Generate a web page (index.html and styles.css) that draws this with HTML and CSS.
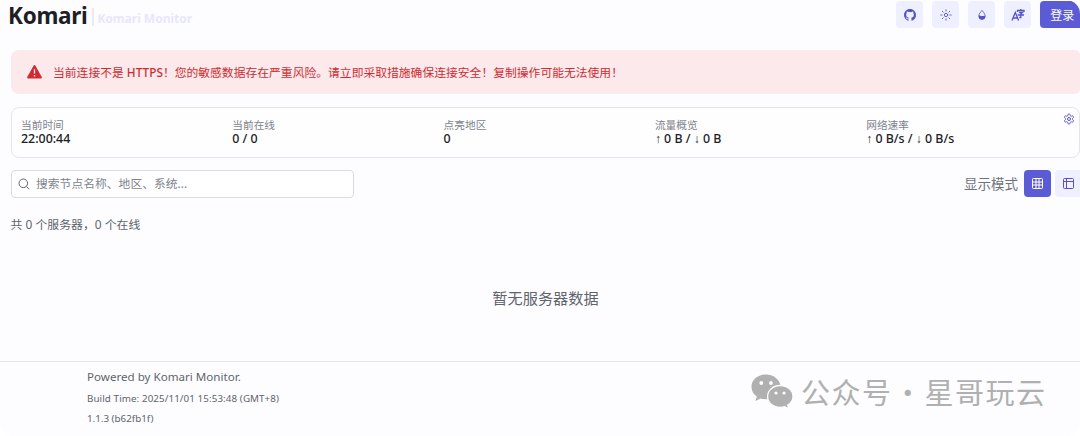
FILE: index.html
```html
<!DOCTYPE html>
<html lang="zh-CN">

<head>
    <meta charset="UTF-8">
    <meta name="viewport" content="width=device-width, initial-scale=1.0">
    <title>Komari Monitor</title>
    <link rel="stylesheet" href="styles.css">
</head>

<body>
    <div class="page">
        <header class="header">
            <div class="brand">
                <span class="brand-name">Komari</span>
                <span class="brand-sub">Komari Monitor</span>
            </div>
            <nav class="actions">
                <button class="icon-btn" aria-label="GitHub">
                    <svg width="12" height="12" viewBox="0 0 16 16" fill="currentColor"><path d="M8 0C3.58 0 0 3.58 0 8c0 3.54 2.29 6.53 5.47 7.59.4.07.55-.17.55-.38 0-.19-.01-.82-.01-1.49-2.01.37-2.53-.49-2.69-.94-.09-.23-.48-.94-.82-1.13-.28-.15-.68-.52-.01-.53.63-.01 1.08.58 1.23.82.72 1.21 1.87.87 2.33.66.07-.52.28-.87.51-1.07-1.78-.2-3.64-.89-3.64-3.95 0-.87.31-1.59.82-2.15-.08-.2-.36-1.02.08-2.12 0 0 .67-.21 2.2.82.64-.18 1.32-.27 2-.27s1.36.09 2 .27c1.53-1.04 2.2-.82 2.2-.82.44 1.1.16 1.92.08 2.12.51.56.82 1.27.82 2.15 0 3.07-1.87 3.75-3.65 3.95.29.25.54.73.54 1.48 0 1.07-.01 1.93-.01 2.2 0 .21.15.46.55.38A8.01 8.01 0 0 0 16 8c0-4.42-3.58-8-8-8z"/></svg>
                </button>
                <button class="icon-btn" aria-label="主题">
                    <svg width="12" height="12" viewBox="0 0 15 15" fill="none" stroke="currentColor" stroke-width="1.1" stroke-linecap="round"><circle cx="7.5" cy="7.5" r="2.1"/><path d="M7.5 1v1.6M7.5 12.4V14M1 7.5h1.6M12.4 7.5H14M2.9 2.9 4 4M11 11l1.1 1.1M2.9 12.1 4 11M11 4l1.1-1.1"/></svg>
                </button>
                <button class="icon-btn" aria-label="颜色">
                    <svg width="12" height="12" viewBox="0 0 15 15"><path d="M7.5 1.6C6 3.8 3.5 6 3.5 9a4 4 0 0 0 8 0c0-3-2.5-5.2-4-7.4z" fill="none" stroke="currentColor" stroke-width="1"/><path d="M3.5 8.5c1.5-.9 2.6.7 4 .4 1.5-.3 2.5-.9 4-.4V9a4 4 0 0 1-8 0z" fill="currentColor"/></svg>
                </button>
                <button class="icon-btn" aria-label="语言">
                    <svg width="14" height="14" viewBox="0 0 14 14" fill="none" stroke="currentColor" stroke-width="1.3"><path d="M1 12.5 4.3 4.5 7.6 12.5M2.2 10h4.2M6.5 4V2.5H13V4M9.7 1v1.5M8 4.5h3.5L9.8 6v3.5H8.3M6.7 7h6.3"/></svg>
                </button>
                <button class="login-btn">登录</button>
            </nav>
        </header>

        <main class="main">
            <div class="alert">
                <svg class="alert-icon" width="17" height="16" viewBox="0 0 17 16"><path d="M8.5 2.2 14.8 13.5H2.2z" fill="currentColor" stroke="currentColor" stroke-width="2.2" stroke-linejoin="round"/><path d="M8.5 5.3v4.2M8.5 11v1.4" stroke="#fce9eb" stroke-width="1.3"/></svg>
                <span class="alert-text">当前连接不是 <span class="medium">HTTPS</span>！您的敏感数据存在严重风险。请立即采取措施确保连接安全！复制操作可能无法使用！</span>
            </div>

            <section class="stats">
                <div class="stat">
                    <span class="stat-label">当前时间</span>
                    <span class="stat-value">22:00:44</span>
                </div>
                <div class="stat">
                    <span class="stat-label">当前在线</span>
                    <span class="stat-value">0 / 0</span>
                </div>
                <div class="stat">
                    <span class="stat-label">点亮地区</span>
                    <span class="stat-value">0</span>
                </div>
                <div class="stat">
                    <span class="stat-label">流量概览</span>
                    <span class="stat-value"><i class="arrow">↑</i> 0 B / <i class="arrow">↓</i> 0 B</span>
                </div>
                <div class="stat">
                    <span class="stat-label">网络速率</span>
                    <span class="stat-value"><i class="arrow">↑</i> 0 B/s / <i class="arrow">↓</i> 0 B/s</span>
                </div>
                <svg class="gear" width="12" height="12" viewBox="0 0 24 24" fill="none" stroke="currentColor" stroke-width="2"><path d="M12.22 2h-.44a2 2 0 0 0-2 2v.18a2 2 0 0 1-1 1.73l-.43.25a2 2 0 0 1-2 0l-.15-.08a2 2 0 0 0-2.73.73l-.22.38a2 2 0 0 0 .73 2.73l.15.1a2 2 0 0 1 1 1.72v.51a2 2 0 0 1-1 1.74l-.15.09a2 2 0 0 0-.73 2.73l.22.38a2 2 0 0 0 2.73.73l.15-.08a2 2 0 0 1 2 0l.43.25a2 2 0 0 1 1 1.73V20a2 2 0 0 0 2 2h.44a2 2 0 0 0 2-2v-.18a2 2 0 0 1 1-1.73l.43-.25a2 2 0 0 1 2 0l.15.08a2 2 0 0 0 2.73-.73l.22-.39a2 2 0 0 0-.73-2.73l-.15-.08a2 2 0 0 1-1-1.74v-.5a2 2 0 0 1 1-1.74l.15-.09a2 2 0 0 0 .73-2.73l-.22-.38a2 2 0 0 0-2.73-.73l-.15.08a2 2 0 0 1-2 0l-.43-.25a2 2 0 0 1-1-1.73V4a2 2 0 0 0-2-2z"/><circle cx="12" cy="12" r="3"/></svg>
            </section>

            <div class="toolbar">
                <label class="search">
                    <svg width="12" height="12" viewBox="0 0 12 12" fill="none" stroke="currentColor" stroke-width="1"><circle cx="5.3" cy="5.3" r="4.3"/><path d="m8.4 8.4 2.8 2.8"/></svg>
                    <input type="text" placeholder="搜索节点名称、地区、系统...">
                </label>
                <div class="view-mode">
                    <span class="view-label">显示模式</span>
                    <button class="icon-btn active" aria-label="网格">
                        <svg width="11" height="11" viewBox="0 0 11 11" fill="none" stroke="currentColor" stroke-width="1"><rect x=".5" y=".5" width="10" height="10" rx=".8"/><path d="M4 .5v10M7 .5v10M.5 4h10M.5 7h10"/></svg>
                    </button>
                    <button class="icon-btn" aria-label="表格">
                        <svg width="11" height="11" viewBox="0 0 11 11" fill="none" stroke="currentColor" stroke-width="1"><rect x=".5" y=".5" width="10" height="10" rx="1"/><path d="M3.5 .5v10M.5 3.5h10"/></svg>
                    </button>
                </div>
            </div>

            <p class="summary">共 0 个服务器，0 个在线</p>
            <p class="empty">暂无服务器数据</p>
        </main>

        <footer class="footer">
            <p class="powered">Powered by Komari Monitor.</p>
            <p class="build">Build Time: 2025/11/01 15:53:48 (GMT+8)</p>
            <p>1.1.3 (b62fb1f)</p>
        </footer>

        <div class="watermark">
            <svg width="42" height="35" viewBox="0 0 42 35">
                <path fill="#b0b0b0" d="M15 .5C6.9.5.5 6 .5 13c0 4 2 7.3 5.3 9.6L4.5 27l5-2.6c1.7.6 3.5.9 5.5.9 8 0 14.500-5.300 14.500-12.300S23 .5 15 .5z"/>
                <path fill="#b0b0b0" stroke="#fdfdff" stroke-width="1.3" d="M29.3 11.5c-7.2 0-12.7 4.8-12.7 10.9s5.5 10.9 12.7 10.9c1.5 0 3-.2 4.3-.6l4.2 2.1-1.1-3.7c3.2-2 5.3-5.1 5.3-8.7 0-6.1-5.5-10.9-12.7-10.9z"/>
                <g fill="#fdfdff"><circle cx="10.3" cy="9" r="1.9"/><circle cx="20" cy="9" r="1.9"/><circle cx="25" cy="19" r="1.6"/><circle cx="33" cy="19" r="1.6"/></g>
            </svg>
            <span class="watermark-text">公众号 · 星哥玩云</span>
        </div>
    </div>
</body>

</html>
```
FILE: styles.css
```css
* {
    box-sizing: border-box;
}

html {
    background: #fff;
}

body {
    margin: 0;
    font-family: "Noto Sans", "Noto Sans CJK SC", sans-serif;
    color: #1c2024;
}

p {
    margin: 0;
}

button {
    border: none;
    padding: 0;
    font-family: inherit;
    cursor: pointer;
}

.page {
    position: relative;
    height: 436px;
    display: flex;
    flex-direction: column;
    overflow: hidden;
    background: #fdfdff;
    border-radius: 14px;
}

.header {
    display: flex;
    justify-content: space-between;
    height: 30px;
    padding: 1px 0 0 8px;
}

.brand {
    display: flex;
    align-items: center;
}

.brand-name {
    font-size: 22.5px;
    font-weight: 700;
    line-height: 28px;
    letter-spacing: -0.3px;
}

.brand-sub {
    margin: 3px 0 0 5px;
    padding: 3px 0 0 3px;
    border-left: 2px solid #ebebef;
    font-size: 12px;
    font-weight: 700;
    line-height: 15px;
    color: #e6e7ff;
}

.actions {
    display: flex;
    gap: 9px;
    flex-shrink: 0;
    padding-top: 0.4px;
}

.icon-btn {
    display: flex;
    align-items: center;
    justify-content: center;
    width: 27px;
    height: 27px;
    border-radius: 4px;
    background: #eeefff;
    color: #5753c6;
}

.icon-btn.active {
    background: #5b5bd6;
    color: #fff;
}

.login-btn {
    width: 39.6px;
    height: 27px;
    padding-left: 4px;
    border-radius: 4px 0 0 4px;
    background: #5b5bd6;
    color: #fff;
    font-size: 12px;
}

.main {
    flex: 1;
    padding: 20px 0 0 11px;
}

.alert {
    display: flex;
    align-items: center;
    gap: 10px;
    height: 44px;
    padding-left: 15px;
    border-radius: 8px 5px 5px 8px;
    background: #fce9eb;
    color: #ce2c31;
    font-size: 11.8px;
    white-space: nowrap;
}

.alert-icon {
    flex-shrink: 0;
}

.alert-text {
    padding-bottom: 1px;
}

.medium {
    font-weight: 500;
}

.stats {
    position: relative;
    display: grid;
    grid-template-columns: repeat(5, 211.3px);
    height: 51px;
    margin-top: 13px;
    padding: 10px 0 0 9px;
    border: 1px solid #e4e4ea;
    border-radius: 8px;
    background: #fefeff;
    overflow: hidden;
}

.stat {
    display: flex;
    flex-direction: column;
}

.stat-label {
    font-size: 10.7px;
    line-height: 14px;
    color: #80838d;
}

.stat-value {
    font-size: 12.4px;
    font-weight: 500;
    line-height: 13px;
}

.arrow {
    display: inline-block;
    width: 6px;
    font-family: "Liberation Sans", sans-serif;
    font-size: 12px;
    font-style: normal;
}

.gear {
    position: absolute;
    top: 5px;
    right: 4px;
    color: #5753c6;
}

.toolbar {
    display: flex;
    justify-content: space-between;
    margin-top: 12px;
}

.search {
    display: flex;
    align-items: center;
    gap: 6px;
    width: 343px;
    height: 27.5px;
    padding-left: 6px;
    border: 1px solid #d9d9e0;
    border-radius: 4px;
    background: #fff;
    color: #60646c;
}

.search input {
    flex: 1;
    border: none;
    outline: none;
    padding: 0 0 1px;
    background: none;
    font-family: inherit;
    font-size: 11.8px;
}

.search input::placeholder {
    color: #80838d;
}

.view-mode {
    display: flex;
    align-items: center;
    gap: 4px;
    margin-right: -2px;
}

.view-label {
    margin-right: 2px;
    font-size: 13.5px;
    line-height: 20px;
    color: #6f727b;
}

.summary {
    margin-top: 17px;
    margin-left: -0.5px;
    font-size: 11.9px;
    line-height: 18px;
    color: #60646c;
}

.empty {
    margin-top: 53px;
    font-size: 15.2px;
    line-height: 24px;
    color: #60646c;
    text-align: center;
}

.footer {
    height: 75px;
    padding: 5px 0 0 87px;
    border-top: 1px solid #e3e4e8;
    font-size: 9.8px;
    line-height: 20px;
    color: #60646c;
}

.powered {
    margin-bottom: 3px;
    font-size: 11.6px;
    line-height: 19px;
}

.build {
    letter-spacing: 0.09px;
}

/* floating account tag over the footer */
.watermark {
    position: absolute;
    top: 374px;
    left: 751px;
    display: flex;
    align-items: center;
    color: #b0b0b0;
}

.watermark-text {
    margin: -2px 0 0 8px;
    font-family: "Noto Sans CJK SC", sans-serif;
    font-size: 29px;
    line-height: 36px;
    letter-spacing: 1.5px;
    word-spacing: -7.2px;
    white-space: nowrap;
}
```
